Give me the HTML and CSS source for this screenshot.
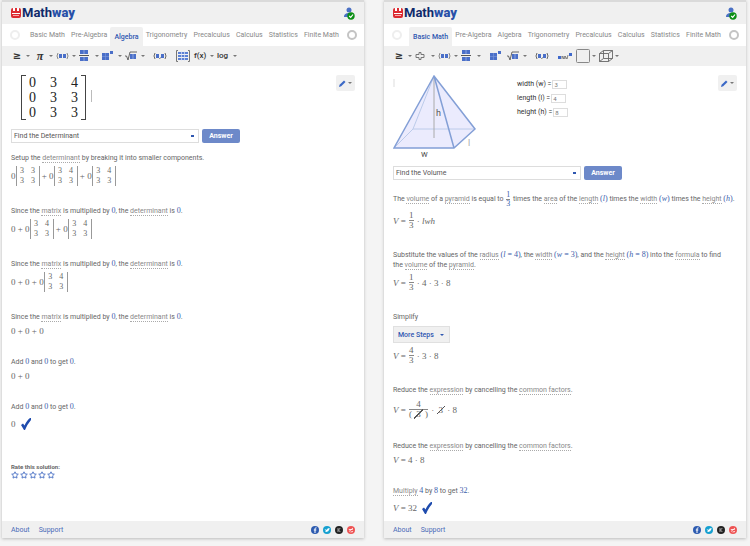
FILE: index.html
```html
<!DOCTYPE html>
<html lang="en">
<head>
  <meta charset="utf-8">
  <title>Mathway</title>
  <link rel="stylesheet" href="styles.css">
</head>
<body>
  <!-- shared icons -->
  <svg class="sprite" aria-hidden="true">
    <symbol id="logo" viewBox="0 0 10 10">
      <rect width="10" height="10" rx="2" fill="#dd2b32"/>
      <path d="M2 0h2v3H2zM6 0h2v3H6zM1 5h8v1H1z" fill="#fff"/>
      <path d="M2 7h6v1H2z" fill="#f5aaaa"/>
    </symbol>
    <symbol id="user" viewBox="0 0 11 13">
      <circle cx="5" cy="3" r="2.5" fill="#4a70c4"/>
      <path d="M0 10c0-3 2-4 5-4s4 1 4 4z" fill="#4a70c4"/>
      <circle cx="7" cy="9" r="3.7" fill="#0b8f14"/>
      <path d="M5.200 9l1.500 1.400L9 7.500" fill="none" stroke="#fff" stroke-width="1.200"/>
    </symbol>
    <symbol id="product" viewBox="0 0 13 10">
      <path d="M2 2Q0 5 2 8M11 2Q13 5 11 8" fill="none" stroke="#888"/>
      <path d="M3 3h3v4H3zM7 3h3v4H7z" fill="#4a6fc8"/>
    </symbol>
    <symbol id="fraction" viewBox="0 0 10 12">
      <path d="M1 0h8v4H1zM1 7h8v4H1z" fill="#4a6fc8"/>
      <path d="M5 0v4M5 7v4" stroke="#a9bce8" stroke-width=".7"/>
      <path d="M0 5.500h10" stroke="#555"/>
    </symbol>
    <symbol id="power" viewBox="0 0 12 12">
      <path d="M0 3h7v7H0z" fill="#4a6fc8"/>
      <path d="M3.500 3v7M0 6.500h7" stroke="#7f9bdc" stroke-width=".6"/>
      <path d="M8 1h3v3H8z" fill="#4a6fc8"/>
    </symbol>
    <symbol id="root" viewBox="0 0 12 10">
      <path d="M0 5l1.500 0L3 9L5 1h7" fill="none" stroke="#555" stroke-width=".9"/>
      <path d="M5 3h6v5H5z" fill="#4a6fc8"/>
      <path d="M8 3v5" stroke="#a9bce8" stroke-width=".7"/>
    </symbol>
    <symbol id="point" viewBox="0 0 14 10">
      <path d="M2 2Q0 5 2 8M12 2Q14 5 12 8M7.500 6.500L6.500 8" fill="none" stroke="#666"/>
      <path d="M3 3h3v4H3zM8 3h3v4H8z" fill="#4a6fc8"/>
    </symbol>
    <symbol id="matrix" viewBox="0 0 14 12">
      <path d="M2 .5H.5v11H2M12 .5h1.500v11H12" fill="none" stroke="#777"/>
      <path d="M2 2h10v2H2zM2 5h10v2H2zM2 8h10v2H2z" fill="#5b80d4"/>
      <path d="M5.500 1v10M8.500 1v10" stroke="#dce4f7" stroke-width=".7"/>
    </symbol>
    <symbol id="divide" viewBox="0 0 10 10">
      <path d="M1 3.500h3v-2h2v2h3v3H6v2H4v-2H1z" fill="none" stroke="#777"/>
    </symbol>
    <symbol id="scientific" viewBox="0 0 14 10">
      <path d="M0 5h3v3H0zM11 2h3v3h-3z" fill="#3f69cc"/>
      <path d="M4 8V5l2 3V5M7 8V5l2 3 1-4" fill="none" stroke="#666" stroke-width=".8"/>
    </symbol>
    <symbol id="square" viewBox="0 0 14 14">
      <rect x=".5" y=".5" width="13" height="13" rx="1" fill="none" stroke="#888"/>
    </symbol>
    <symbol id="cube" viewBox="0 0 14 14">
      <path d="M.5 4.500h9v8h-9zM4.500 1.500h9v8h-9zM.5 4.500l4-3M9.500 4.500l4-3M9.500 12.500l4-3M.5 12.500l4-3" fill="none" stroke="#666" stroke-width=".9"/>
    </symbol>
    <symbol id="pencil" viewBox="0 0 7 7">
      <path d="M0 7l.6-2.300L5 .6 6.500 2 2.200 6.300z" fill="#3b68c6"/>
    </symbol>
    <symbol id="check" viewBox="0 0 10 12">
      <path d="M0 7l2-1.500L3.500 7.500Q6 2 9 0h1v2Q6.500 6 4 12H3z" fill="#1f4cae"/>
    </symbol>
    <symbol id="star" viewBox="0 0 8 8">
      <path d="M4 .8l1 2.100 2.300.3-1.700 1.600.4 2.300L4 6 2 7.100l.4-2.300L.7 3.200 3 2.900z" fill="#fff" stroke="#4a70c4" stroke-width=".9"/>
    </symbol>
    <symbol id="facebook" viewBox="0 0 8 8">
      <circle cx="4" cy="4" r="4" fill="#2d5bb0"/>
      <path d="M5.500 1.800q-1.500-.2-1.500 1V7M2.800 4h2.500" fill="none" stroke="#fff"/>
    </symbol>
    <symbol id="twitter" viewBox="0 0 8 8">
      <circle cx="4" cy="4" r="4" fill="#16a0d0"/>
      <path d="M1.500 3q1.500 1 2.500.7Q4.300 2 5.500 2.200l1.500.4-.8 1Q5.800 6.500 2 6l1-1z" fill="#fff"/>
    </symbol>
    <symbol id="mail" viewBox="0 0 8 8">
      <circle cx="4" cy="4" r="4" fill="#222"/>
      <path d="M3 2v4M5.300 2L3.500 4l1.800 2" fill="none" stroke="#ccc" stroke-width=".8"/>
    </symbol>
    <symbol id="share" viewBox="0 0 8 8">
      <circle cx="4" cy="4" r="4" fill="#ee5454"/>
      <path d="M1.800 3.500h4M2 5.500L6 2M3.500 6l2.500-.5" fill="none" stroke="#fff" stroke-width=".8"/>
    </symbol>
  </svg>

  <div class="screens">
    <section class="panel">
      <header class="top">
        <div class="logo"><svg width="10" height="10"><use href="#logo"/></svg><span>Math<b>way</b></span></div>
        <button class="icon-button" aria-label="Account"><svg width="11" height="13"><use href="#user"/></svg></button>
      </header>
      <nav class="tabs">
        <button class="scroll faint" aria-label="Previous"></button>
        <div class="tab-list">
          <a href="#">Basic Math</a>
          <a href="#">Pre-Algebra</a>
          <a href="#" class="active">Algebra</a>
          <a href="#">Trigonometry</a>
          <a href="#">Precalculus</a>
          <a href="#">Calculus</a>
          <a href="#">Statistics</a>
          <a href="#">Finite Math</a>
        </div>
        <button class="scroll" aria-label="Next"></button>
      </nav>
      <div class="toolbar">
        <button class="caret"><span class="glyph">≥</span></button>
        <button class="caret"><span class="glyph pi">π</span></button>
        <button class="caret" aria-label="Product"><svg width="13" height="10"><use href="#product"/></svg></button>
        <button class="caret" aria-label="Fraction"><svg width="10" height="12"><use href="#fraction"/></svg></button>
        <button class="caret" aria-label="Power"><svg width="12" height="12"><use href="#power"/></svg></button>
        <button class="caret" aria-label="Root"><svg width="12" height="10"><use href="#root"/></svg></button>
        <button aria-label="Point"><svg width="14" height="10"><use href="#point"/></svg></button>
        <button aria-label="Matrix"><svg width="14" height="12"><use href="#matrix"/></svg></button>
        <button class="caret"><span class="word">f(x)</span></button>
        <button class="caret"><span class="word">log</span></button>
      </div>
      <main class="content">
        <div class="problem">
          <div class="matrix">
            <span>0</span><span>3</span><span>4</span>
            <span>0</span><span>3</span><span>3</span>
            <span>0</span><span>3</span><span>3</span>
          </div>
          <span class="cursor"></span>
          <button class="edit caret" aria-label="Edit"><svg width="7" height="7"><use href="#pencil"/></svg></button>
        </div>
        <form class="ask">
          <select aria-label="Topic"><option>Find the Determinant</option></select>
          <button type="button" class="answer">Answer</button>
        </form>

        <div class="step">
          <p>Setup the <a href="#">determinant</a> by breaking it into smaller components.</p>
          <div class="math tall">0<span class="det"><i>3</i><i>3</i><i>3</i><i>3</i></span> + 0<span class="det"><i>3</i><i>4</i><i>3</i><i>3</i></span> + 0<span class="det"><i>3</i><i>4</i><i>3</i><i>3</i></span></div>
        </div>
        <div class="step">
          <p>Since the <a href="#">matrix</a> is multiplied by <b>0</b>, the <a href="#">determinant</a> is <b>0</b>.</p>
          <div class="math tall">0 + 0<span class="det"><i>3</i><i>4</i><i>3</i><i>3</i></span> + 0<span class="det"><i>3</i><i>4</i><i>3</i><i>3</i></span></div>
        </div>
        <div class="step">
          <p>Since the <a href="#">matrix</a> is multiplied by <b>0</b>, the <a href="#">determinant</a> is <b>0</b>.</p>
          <div class="math tall">0 + 0 + 0<span class="det"><i>3</i><i>4</i><i>3</i><i>3</i></span></div>
        </div>
        <div class="step">
          <p>Since the <a href="#">matrix</a> is multiplied by <b>0</b>, the <a href="#">determinant</a> is <b>0</b>.</p>
          <div class="math">0 + 0 + 0</div>
        </div>
        <div class="step">
          <p>Add <b>0</b> and <b>0</b> to get <b>0</b>.</p>
          <div class="math">0 + 0</div>
        </div>
        <div class="step">
          <p>Add <b>0</b> and <b>0</b> to get <b>0</b>.</p>
          <div class="math result">0<svg width="10" height="12"><use href="#check"/></svg></div>
        </div>
        <div class="rate">
          <p>Rate this solution:</p>
          <div class="stars">
            <button aria-label="1 star"><svg width="8" height="8"><use href="#star"/></svg></button>
            <button aria-label="2 stars"><svg width="8" height="8"><use href="#star"/></svg></button>
            <button aria-label="3 stars"><svg width="8" height="8"><use href="#star"/></svg></button>
            <button aria-label="4 stars"><svg width="8" height="8"><use href="#star"/></svg></button>
            <button aria-label="5 stars"><svg width="8" height="8"><use href="#star"/></svg></button>
          </div>
        </div>
      </main>
      <footer class="bottom">
        <a href="#">About</a>
        <a href="#">Support</a>
        <div class="social">
          <a href="#" aria-label="Facebook"><svg width="8" height="8"><use href="#facebook"/></svg></a>
          <a href="#" aria-label="Twitter"><svg width="8" height="8"><use href="#twitter"/></svg></a>
          <a href="#" aria-label="Mail"><svg width="8" height="8"><use href="#mail"/></svg></a>
          <a href="#" aria-label="Share"><svg width="8" height="8"><use href="#share"/></svg></a>
        </div>
      </footer>
    </section>

    <section class="panel">
      <header class="top">
        <div class="logo"><svg width="10" height="10"><use href="#logo"/></svg><span>Math<b>way</b></span></div>
        <button class="icon-button" aria-label="Account"><svg width="11" height="13"><use href="#user"/></svg></button>
      </header>
      <nav class="tabs">
        <button class="scroll faint" aria-label="Previous"></button>
        <div class="tab-list">
          <a href="#" class="active">Basic Math</a>
          <a href="#">Pre-Algebra</a>
          <a href="#">Algebra</a>
          <a href="#">Trigonometry</a>
          <a href="#">Precalculus</a>
          <a href="#">Calculus</a>
          <a href="#">Statistics</a>
          <a href="#">Finite Math</a>
        </div>
        <button class="scroll" aria-label="Next"></button>
      </nav>
      <div class="toolbar">
        <button class="caret"><span class="glyph">≥</span></button>
        <button class="caret" aria-label="Divide"><svg width="10" height="10"><use href="#divide"/></svg></button>
        <button class="caret" aria-label="Product"><svg width="13" height="10"><use href="#product"/></svg></button>
        <button class="caret" aria-label="Fraction"><svg width="10" height="12"><use href="#fraction"/></svg></button>
        <button aria-label="Power"><svg width="12" height="12"><use href="#power"/></svg></button>
        <button class="caret" aria-label="Root"><svg width="12" height="10"><use href="#root"/></svg></button>
        <button aria-label="Point"><svg width="14" height="10"><use href="#point"/></svg></button>
        <button aria-label="Scientific notation"><svg width="14" height="10"><use href="#scientific"/></svg></button>
        <button class="caret" aria-label="Shapes"><svg width="14" height="14"><use href="#square"/></svg></button>
        <button class="caret" aria-label="Solids"><svg width="14" height="14"><use href="#cube"/></svg></button>
      </div>
      <main class="content">
        <div class="problem figure">
          <svg class="pyramid" width="86" height="84" viewBox="0 0 86 84">
            <path d="M41 1L1 73h60l21-19z" fill="#ebebfd"/>
            <path d="M41 1L20 54h62M20 54L1 73" fill="none" stroke="#bccbea"/>
            <path d="M41 1v62" stroke="#aaa"/>
            <path d="M41 1L1 73h60l21-19zL61 73" fill="none" stroke="#839fd6" stroke-width="1.500"/>
            <path d="M1 4v8" stroke="#ddd"/>
            <text x="43" y="41">h</text>
            <text x="28" y="82">w</text>
            <text x="75" y="71" class="dim">l</text>
          </svg>
          <div class="sizes">
            <label>width (w) = <input type="text" value="3"></label>
            <label>length (l) = <input type="text" value="4"></label>
            <label>height (h) = <input type="text" value="8"></label>
          </div>
          <button class="edit caret" aria-label="Edit"><svg width="7" height="7"><use href="#pencil"/></svg></button>
        </div>
        <form class="ask">
          <select aria-label="Topic"><option>Find the Volume</option></select>
          <button type="button" class="answer">Answer</button>
        </form>

        <div class="step">
          <p class="with-frac">The <a href="#">volume</a> of a <a href="#">pyramid</a> is equal to <span class="frac blue"><span>1</span><span>3</span></span> times the <a href="#">area</a> of the <a href="#">length</a> <b>(<i>l</i>)</b> times the <a href="#">width</a> <b>(<i>w</i>)</b> times the <a href="#">height</a> <b>(<i>h</i>)</b>.</p>
          <div class="math mid"><i>V</i> = <span class="frac"><span>1</span><span>3</span></span> · <i>lwh</i></div>
        </div>
        <div class="step">
          <p>Substitute the values of the <a href="#">radius</a> <b>(<i>l</i> = 4)</b>, the <a href="#">width</a> <b>(<i>w</i> = 3)</b>, and the <a href="#">height</a> <b>(<i>h</i> = 8)</b> into the <a href="#">formula</a> to find the&nbsp;<a href="#">volume</a> of the <a href="#">pyramid</a>.</p>
          <div class="math mid"><i>V</i> = <span class="frac"><span>1</span><span>3</span></span> · 4 · 3 · 8</div>
        </div>
        <div class="step">
          <p>Simplify</p>
          <button class="more caret">More Steps</button>
          <div class="math mid"><i>V</i> = <span class="frac"><span>4</span><span>3</span></span> · 3 · 8</div>
        </div>
        <div class="step">
          <p>Reduce the <a href="#">expression</a> by cancelling the <a href="#">common factors</a>.</p>
          <div class="math cancel"><i>V</i> = <span class="frac"><span>4</span><span>( <s>3</s> )</span></span> · <s>3</s> · 8</div>
        </div>
        <div class="step">
          <p>Reduce the <a href="#">expression</a> by cancelling the <a href="#">common factors</a>.</p>
          <div class="math"><span><i>V</i> = 4 · 8</span></div>
        </div>
        <div class="step last">
          <p><a href="#">Multiply</a> <b>4</b> by <b>8</b> to get <b>32</b>.</p>
          <div class="math result"><span><i>V</i> = 32</span><svg width="10" height="12"><use href="#check"/></svg></div>
        </div>
      </main>
      <footer class="bottom">
        <a href="#">About</a>
        <a href="#">Support</a>
        <div class="social">
          <a href="#" aria-label="Facebook"><svg width="8" height="8"><use href="#facebook"/></svg></a>
          <a href="#" aria-label="Twitter"><svg width="8" height="8"><use href="#twitter"/></svg></a>
          <a href="#" aria-label="Mail"><svg width="8" height="8"><use href="#mail"/></svg></a>
          <a href="#" aria-label="Share"><svg width="8" height="8"><use href="#share"/></svg></a>
        </div>
      </footer>
    </section>
  </div>
</body>
</html>
```
FILE: styles.css
```css
* {
  box-sizing: border-box;
}

body {
  margin: 0;
  background-color: #f4f4f4;
  color: #666;
  font-family: Roboto, Arial, sans-serif;
  font-size: 7px;
  line-height: 10px;
}

p {
  margin: 0;
}

button {
  padding: 0;
  border: none;
  background: none;
  color: inherit;
  font-family: inherit;
  font-size: 7px;
  line-height: 10px;
  cursor: pointer;
}

a {
  color: inherit;
  text-decoration: none;
}

svg {
  display: block;
  flex: none;
}

.sprite {
  position: absolute;
  width: 0;
  height: 0;
}

.screens {
  display: flex;
  gap: 20px;
  padding: 0 4px 8px 2px;
  min-height: 100vh;
}

.panel {
  display: flex;
  flex-direction: column;
  flex: 1;
  min-width: 0;
  background-color: #fff;
  border-top: 2px solid #dadada;
  box-shadow: 0 1px 3px #bbb;
}

/* header */
.top {
  display: flex;
  align-items: center;
  justify-content: space-between;
  height: 22px;
  padding: 0 9px;
  background-color: #f0f0f0;
}

.logo {
  display: flex;
  align-items: center;
  gap: 1px;
  color: #0f2a6b;
  font-size: 13px;
  font-weight: bold;
  line-height: 16px;
}

.logo b {
  color: #2850a8;
}

/* subject tabs */
.tabs {
  display: flex;
  align-items: center;
  height: 22px;
  padding: 0 7px 0 8px;
}

.scroll {
  width: 10px;
  height: 10px;
  border: 2px solid #c4c4c4;
  border-radius: 50%;
}

.scroll.faint {
  border-color: #eee;
}

.tab-list {
  display: flex;
  flex: 1;
  justify-content: space-between;
  align-self: stretch;
  align-items: flex-end;
  padding: 0 5px 0 7px;
}

.tab-list a {
  padding: 5px 3px 6px;
  color: #888;
  white-space: nowrap;
}

.tab-list .active {
  padding: 5px 4px 4px;
  background-color: #f0f0f0;
  border-radius: 2px 2px 0 0;
  color: #2f57b0;
  font-weight: 500;
}

/* symbol toolbar */
.toolbar {
  display: flex;
  align-items: center;
  height: 20px;
  padding: 0 8px;
  background-color: #f0f0f0;
}

.toolbar button {
  display: flex;
  align-items: center;
  justify-content: center;
  width: 23px;
  height: 20px;
}

.toolbar .caret {
  justify-content: space-between;
  padding-right: 3px;
}

.caret::after {
  content: "";
  border: 2px solid transparent;
  border-top-color: #777;
  border-bottom: none;
}

.glyph {
  width: 14px;
  color: #333;
  font-family: "DejaVu Sans", sans-serif;
  font-size: 10px;
  font-weight: bold;
}

.pi {
  font-family: "Liberation Serif", serif;
  font-size: 12px;
  font-style: italic;
}

.word {
  color: #333;
  font-size: 8px;
  font-weight: 500;
}

/* problem area */
.content {
  flex: 1;
  padding: 9px 9px 0;
}

.problem {
  display: flex;
  align-items: flex-start;
  height: 54px;
}

.figure {
  height: 91px;
}

.matrix {
  position: relative;
  display: grid;
  grid-template-columns: 21px 21px 21px;
  margin-left: 10px;
  padding: 0 1px;
  color: #222;
  font-family: "Liberation Serif", serif;
  font-size: 14px;
  line-height: 15px;
  text-align: center;
}

.matrix::before,
.matrix::after {
  content: "";
  position: absolute;
  top: 0;
  bottom: 0;
  width: 4px;
  border: 1px solid #444;
}

.matrix::before {
  left: 0;
  border-right: none;
}

.matrix::after {
  right: 0;
  border-left: none;
}

.cursor {
  width: 1px;
  height: 12px;
  margin: 15px 0 0 5px;
  background-color: #bbb;
}

.edit {
  display: flex;
  align-items: center;
  justify-content: center;
  gap: 2px;
  width: 19px;
  height: 16px;
  margin-left: auto;
  border-radius: 2px;
  background-color: #f0f0f0;
}

.pyramid text {
  fill: #555;
  font-size: 9px;
}

.pyramid .dim {
  fill: #aaa;
}

.sizes {
  margin: 2px 0 0 38px;
  color: #333;
}

.sizes label {
  display: flex;
  align-items: center;
  gap: 1px;
  height: 14px;
  white-space: nowrap;
}

.sizes input {
  width: 15px;
  height: 9px;
  padding: 0 1px;
  border: 1px solid #ddd;
  color: #777;
  font-family: inherit;
  font-size: 6px;
}

.ask {
  display: flex;
  gap: 3px;
  margin-bottom: 10px;
}

.ask select {
  width: 188px;
  height: 14px;
  padding: 0 2px;
  appearance: none;
  border: 1px solid #ddd;
  border-radius: 0;
  background: linear-gradient(#2f57b0, #2f57b0) right 4px center / 3px 2px no-repeat #fff;
  color: #555;
  font-family: inherit;
  font-size: 7px;
}

.answer {
  width: 38px;
  height: 14px;
  border-radius: 2px;
  background-color: #6d89c9;
  color: #fff;
  font-weight: bold;
}

/* solution steps */
.step {
  margin-bottom: 20px;
}

.step p a {
  border-bottom: 1px dotted #aaa;
  color: #888;
}

.step b {
  color: #3a5cab;
  font-family: "Liberation Serif", serif;
  font-size: 8px;
  font-weight: normal;
  line-height: 8px;
}

.math {
  display: flex;
  align-items: center;
  height: 12px;
  margin-top: 3px;
  font-family: "Liberation Serif", serif;
  font-size: 9px;
  white-space: pre;
}

.tall {
  height: 20px;
}

.mid {
  height: 19px;
}

.cancel {
  height: 23px;
}

.result {
  gap: 5px;
  height: 18px;
}

.det {
  display: grid;
  grid-template-columns: 11px 11px;
  border: solid #999;
  border-width: 0 1px;
  font-size: 8px;
  text-align: center;
}

.det i {
  font-style: normal;
}

.frac {
  display: inline-flex;
  flex-direction: column;
  padding: 0 1px;
  line-height: 9px;
  text-align: center;
  vertical-align: middle;
}

.frac span:first-child {
  border-bottom: 1px solid #888;
}

.blue {
  color: #3a5cab;
  font-family: "Liberation Serif", serif;
  font-size: 8px;
  line-height: 8px;
}

.with-frac {
  line-height: 18px;
}

s {
  padding: 0 2px;
  background: linear-gradient(135deg, transparent 46%, #555 46%, #555 54%, transparent 54%);
  text-decoration: none;
}

.more {
  display: flex;
  align-items: center;
  gap: 6px;
  height: 17px;
  margin-top: 4px;
  padding: 0 5px 0 4px;
  border: 1px solid #e0e0e0;
  background-color: #f0f0f0;
  color: #2f57b0;
  font-weight: 500;
}

.more::after {
  border-top-color: #2f57b0;
}

.last {
  margin-bottom: 4px;
}

.rate {
  margin-top: 30px;
  font-size: 6px;
  font-weight: bold;
  line-height: 8px;
}

.stars {
  display: flex;
  gap: 1px;
}

/* footer */
.bottom {
  display: flex;
  align-items: center;
  gap: 9px;
  height: 17px;
  padding: 0 9px;
  background-color: #f0f0f0;
  color: #4a6cb8;
}

.social {
  display: flex;
  gap: 4px;
  margin-left: auto;
}
```
